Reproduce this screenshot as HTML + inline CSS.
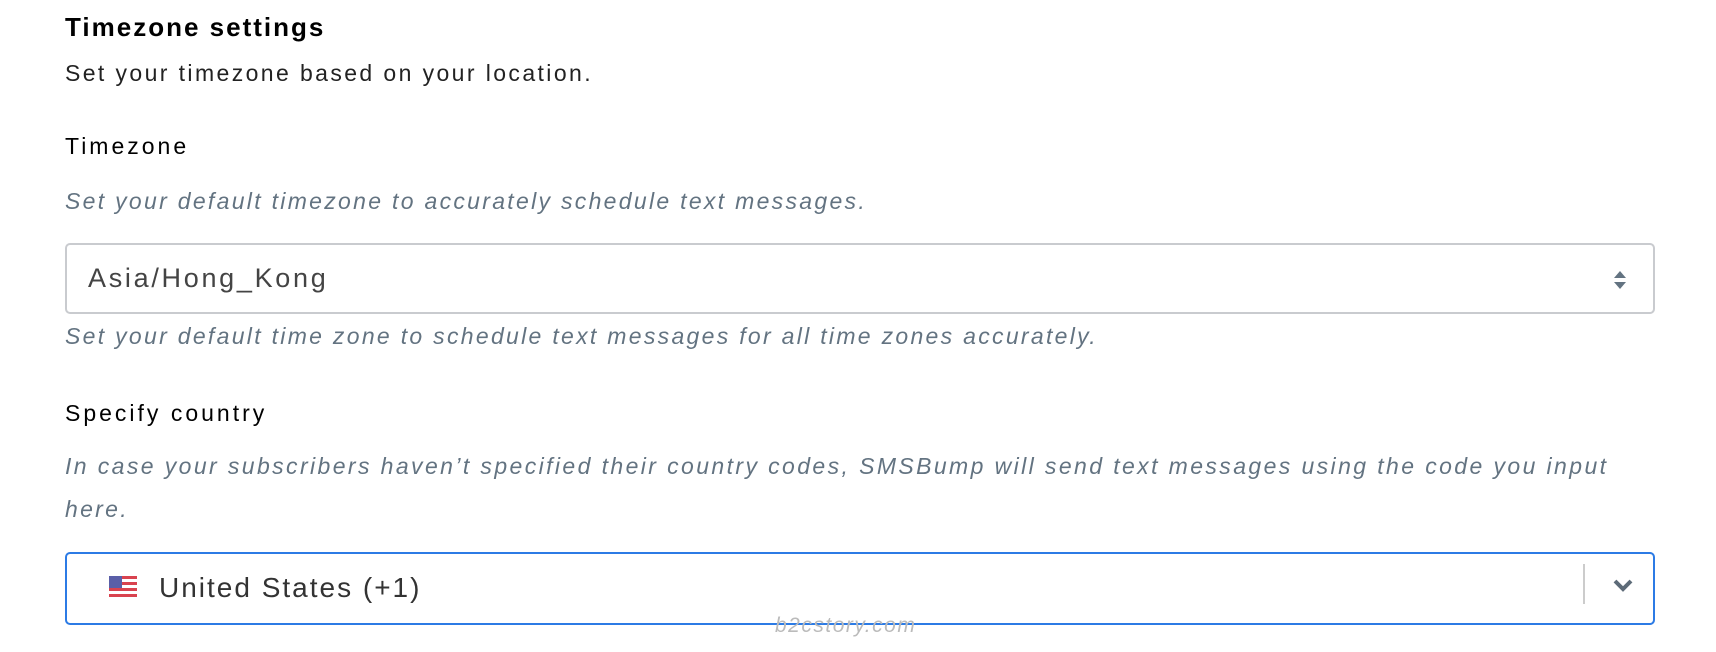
<!DOCTYPE html>
<html><head><meta charset="utf-8"><style>
body{margin:0;width:1716px;height:652px;background:#fff;font-family:"Liberation Sans",sans-serif;position:relative;overflow:hidden}
.a{position:absolute;left:65px;white-space:nowrap}
.t{font-size:26px;font-weight:bold;color:#000;letter-spacing:2px}
.s{font-size:23px;color:#222;letter-spacing:2.4px}
.l{font-size:23px;color:#000;letter-spacing:3px}
.h{font-size:23px;font-style:italic;color:#637381;letter-spacing:2.3px}
.box{position:absolute;left:65px;width:1590px;border:2px solid #c9cbcf;border-radius:5px;box-sizing:border-box;background:#fff}
</style></head><body>
<div class="a t" style="top:12px">Timezone settings</div>
<div class="a s" style="top:60px">Set your timezone based on your location.</div>
<div class="a l" style="top:133px">Timezone</div>
<div class="a h" style="top:188px">Set your default timezone to accurately schedule text messages.</div>
<div class="box" style="top:243px;height:71px">
<div style="position:absolute;left:21px;top:18px;font-size:27px;color:#444;letter-spacing:2.7px">Asia/Hong_Kong</div>
<svg style="position:absolute;right:26px;top:24px" width="14" height="22" viewBox="0 0 14 22"><path d="M7 2L13 9H1Z M7 20L13 13H1Z" fill="#637381"/></svg>
</div>
<div class="a h" style="top:323px">Set your default time zone to schedule text messages for all time zones accurately.</div>
<div class="a l" style="top:400px">Specify country</div>
<div class="a h" style="top:453px;letter-spacing:2.4px">In case your subscribers haven’t specified their country codes, SMSBump will send text messages using the code you input</div>
<div class="a h" style="top:496px">here.</div>
<div class="box" style="top:552px;height:73px;border-color:#2c7be5">
<svg style="position:absolute;left:42px;top:22px" width="28" height="22" viewBox="0 0 28 22"><rect width="28" height="22" fill="#fff"/><g fill="#d9434f"><rect y="0" width="28" height="3"/><rect y="6" width="28" height="3"/><rect y="12" width="28" height="3"/><rect y="18" width="28" height="3"/></g><rect width="13" height="12" fill="#5a5fa8"/></svg>
<div style="position:absolute;left:92px;top:18px;font-size:28px;color:#333;letter-spacing:2px">United States (+1)</div>
<div style="position:absolute;left:1516px;top:10px;width:2px;height:40px;background:#ccc"></div>
<svg style="position:absolute;left:1545px;top:24px" width="22" height="14" viewBox="0 0 22 14"><path d="M3 3L11 11L19 3" fill="none" stroke="#5d6b78" stroke-width="4"/></svg>
</div>
<div style="position:absolute;left:775px;top:614px;font-size:21px;font-style:italic;color:#bbb;letter-spacing:1.5px">b2cstory.com</div>
</body></html>
